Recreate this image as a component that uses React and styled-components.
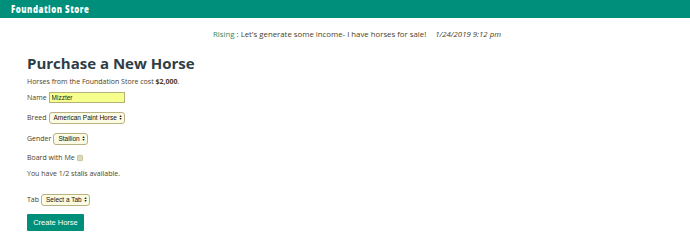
import React from 'react'
import styled, { createGlobalStyle } from 'styled-components'

const GlobalStyle = createGlobalStyle`
 body {
  margin: 0;
  background: #ffffff;
  font-family: 'Open Sans', 'DejaVu Sans', sans-serif;
  color: #4a3e1e;
 }
`

const TopBar = styled.header`
 height: 18px;
 background-color: #008f7a;
 display: flex;
 align-items: center;
 padding-left: 11px;
`

const Brand = styled.h1`
 margin: 0;
 font-family: 'Open Sans', 'DejaVu Sans', sans-serif;
 font-weight: 800;
 font-size: 10.5px;
 letter-spacing: 0.7px;
 color: #ffffff;
 transform: scaleX(0.75);
 transform-origin: left center;
 white-space: nowrap;
`

const Ticker = styled.div`
 margin-top: 11px;
 text-align: center;
 font-size: 7.8px;
 line-height: 10px;
 color: #4a3e1e;
 padding-left: 24px;
 .who {
  color: #2e8a63;
 }
 .when {
  font-style: italic;
  margin-left: 9px;
 }
`

const Main = styled.main`
 padding: 0 27px;
`

const Title = styled.h2`
 margin: 14px 0 0;
 font-size: 15px;
 line-height: 20px;
 font-weight: bold;
 color: #2f3d46;
`

const Para = styled.p`
 margin: ${(p) => p.$top || 0}px 0 0;
 font-size: 7px;
 line-height: 10px;
`

const Row = styled.div`
 display: flex;
 align-items: center;
 gap: 2px;
 height: 11px;
 margin-top: ${(p) => p.$top}px;
 font-size: 7px;
 line-height: 10px;
`

const TextBox = styled.input`
 box-sizing: border-box;
 width: 76px;
 height: 11px;
 margin: 0;
 padding: 0 2px;
 border: 1px solid #b8b07a;
 background: #f6ff8c;
 font-family: 'Liberation Sans', Arial, sans-serif;
 font-size: 6.5px;
 color: #222;
 outline: none;
`

const Picker = styled.div`
 box-sizing: border-box;
 display: inline-flex;
 align-items: center;
 justify-content: space-between;
 gap: 2px;
 height: 12px;
 padding: 0 2px 0 4px;
 border: 1px solid #b9b182;
 border-radius: 3px;
 background: #fbfbe4;
 font-family: 'Liberation Sans', Arial, sans-serif;
 font-size: 6.5px;
 color: #111;
 white-space: nowrap;
`

const Arrows = styled.span`
 display: inline-flex;
 flex-direction: column;
 font-size: 3.5px;
 line-height: 3px;
`

const Check = styled.span`
 display: inline-block;
 width: 4px;
 height: 4px;
 margin-top: 1px;
 border: 1px solid #c9c59e;
 background: #dedcb8;
 border-radius: 1px;
`

const Button = styled.button`
 display: block;
 margin-top: 9px;
 width: 57px;
 height: 17px;
 padding: 0;
 border: none;
 border-radius: 1px;
 background: #008f7a;
 color: #ffffff;
 font-family: 'Liberation Sans', Arial, sans-serif;
 font-size: 7.5px;
`

function Select({ label }) {
 return (
  <Picker>
   {label}
   <Arrows>
    <span>▲</span>
    <span>▼</span>
   </Arrows>
  </Picker>
 )
}

export default function App() {
 return (
  <>
   <GlobalStyle />
   <TopBar>
    <Brand>Foundation Store</Brand>
   </TopBar>
   <Ticker>
    <span className="who">Rising</span> : Let's generate some income- I have horses for sale!
    <span className="when">1/24/2019 9:12 pm</span>
   </Ticker>
   <Main>
    <Title>Purchase a New Horse</Title>
    <Para $top={4}>
     Horses from the Foundation Store cost <b>$2,000</b>.
    </Para>
    <Row $top={5}>
     Name <TextBox defaultValue="Mizzter" />
    </Row>
    <Row $top={9}>
     Breed <Select label="American Paint Horse" />
    </Row>
    <Row $top={10}>
     Gender <Select label="Stallion" />
    </Row>
    <Row $top={8}>
     Board with Me <Check />
    </Row>
    <Para $top={6}>You have 1/2 stalls available.</Para>
    <Row $top={15}>
     Tab <Select label="Select a Tab" />
    </Row>
    <Button>Create Horse</Button>
   </Main>
  </>
 )
}
